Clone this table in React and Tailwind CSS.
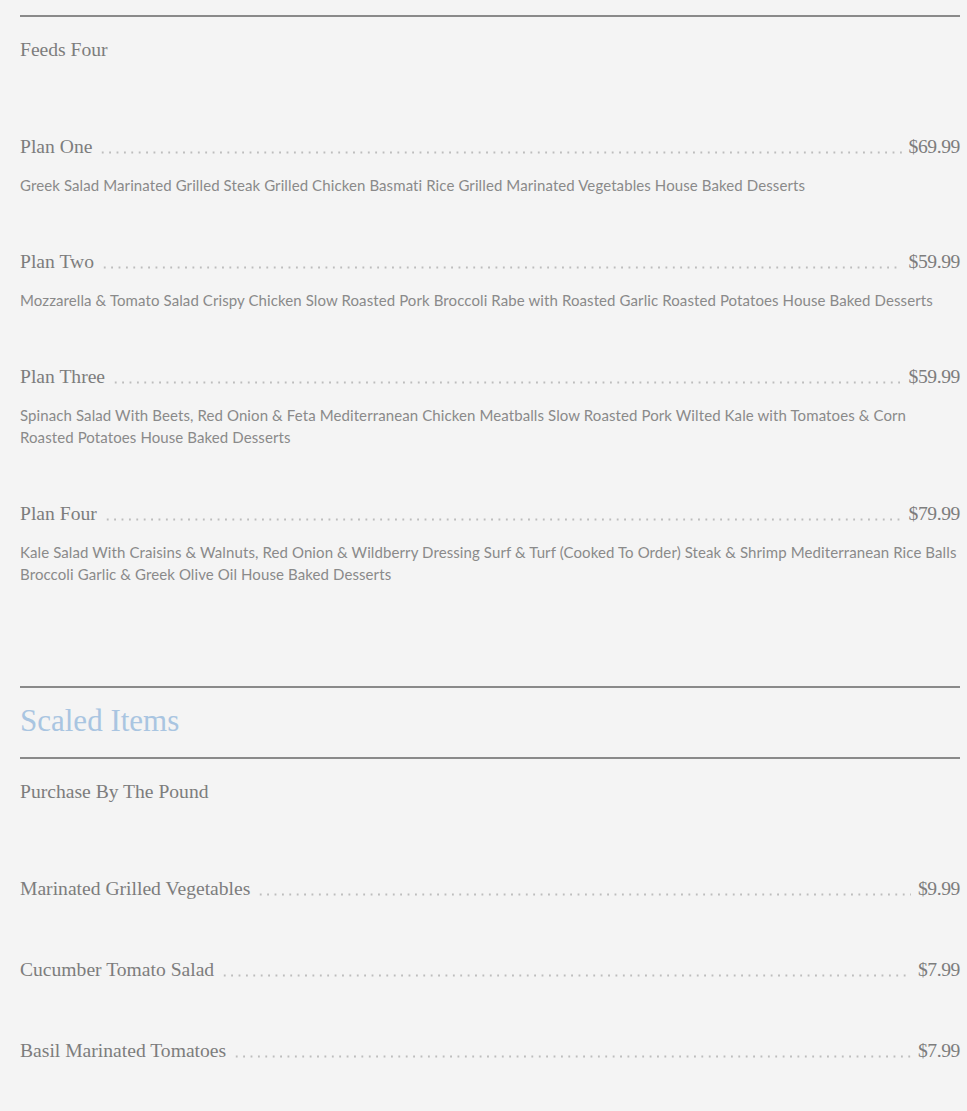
import React from "react";

const serif = { fontFamily: '"Liberation Serif", "DejaVu Serif", serif' };

function Leader({ name, price }) {
  return (
    <div className="flex items-end text-[19.6px] leading-[28px] text-[#7d7d7d]" style={serif}>
      <span className="whitespace-nowrap">{name}</span>
      <span className="mx-[7px] mb-[7px] h-[3px] flex-1 bg-[radial-gradient(circle,#bdbdbd_0.9px,transparent_1.3px)] bg-[length:7.4px_3px] bg-repeat-x" />
      <span className="whitespace-nowrap tracking-[-0.4px]">{price}</span>
    </div>
  );
}

function Plan({ name, price, desc }) {
  return (
    <div>
      <Leader name={name} price={price} />
      <p
        className="mt-[13px] text-[15px] leading-[22px] tracking-[0.1px] text-[#8a8a8a]"
        style={{ fontFamily: 'Lato, "Open Sans", sans-serif' }}
      >
        {desc}
      </p>
    </div>
  );
}

export default function App() {
  const plans = [
    {
      name: "Plan One",
      price: "$69.99",
      desc: "Greek Salad Marinated Grilled Steak Grilled Chicken Basmati Rice Grilled Marinated Vegetables House Baked Desserts",
    },
    {
      name: "Plan Two",
      price: "$59.99",
      desc: "Mozzarella & Tomato Salad Crispy Chicken Slow Roasted Pork Broccoli Rabe with Roasted Garlic Roasted Potatoes House Baked Desserts",
    },
    {
      name: "Plan Three",
      price: "$59.99",
      desc: "Spinach Salad With Beets, Red Onion & Feta Mediterranean Chicken Meatballs Slow Roasted Pork Wilted Kale with Tomatoes & Corn Roasted Potatoes House Baked Desserts",
    },
    {
      name: "Plan Four",
      price: "$79.99",
      desc: "Kale Salad With Craisins & Walnuts, Red Onion & Wildberry Dressing Surf & Turf (Cooked To Order) Steak & Shrimp Mediterranean Rice Balls Broccoli Garlic & Greek Olive Oil House Baked Desserts",
    },
  ];
  const scaled = [
    { name: "Marinated Grilled Vegetables", price: "$9.99" },
    { name: "Cucumber Tomato Salad", price: "$7.99" },
    { name: "Basil Marinated Tomatoes", price: "$7.99" },
  ];
  return (
    <div className="min-h-screen bg-[#f4f4f4] pl-5 pr-[7px] pt-[15px] pb-[40px]">
      <div className="border-t-2 border-[#8a8a8a]" />
      <h3 className="mt-[19px] text-[19.6px] leading-[28px] text-[#7d7d7d]" style={serif}>
        Feeds Four
      </h3>
      <div className="mt-[69px] flex flex-col gap-[52px]">
        {plans.map((p) => (
          <Plan key={p.name} {...p} />
        ))}
      </div>
      <div className="mt-[101px] border-t-2 border-[#8a8a8a]" />
      <h2 className="mt-[13px] text-[31px] leading-[40px] text-[#a9c5e1]" style={serif}>
        Scaled Items
      </h2>
      <div className="mt-[16px] border-t-2 border-[#8a8a8a]" />
      <h3 className="mt-[19px] text-[19.6px] leading-[28px] text-[#7d7d7d]" style={serif}>
        Purchase By The Pound
      </h3>
      <div className="mt-[69px] flex flex-col gap-[53px]">
        {scaled.map((s) => (
          <Leader key={s.name} {...s} />
        ))}
      </div>
    </div>
  );
}
